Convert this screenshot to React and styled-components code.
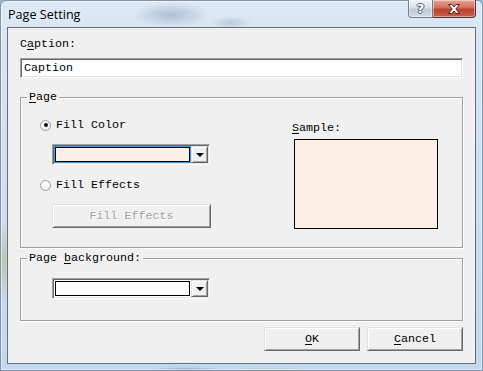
import React from 'react';
import styled, { createGlobalStyle } from 'styled-components';

const GlobalStyle = createGlobalStyle`
  html, body { margin: 0; padding: 0; background: #9fbad6; }
  body { width: 483px; height: 371px; overflow: hidden; }
  * { box-sizing: border-box; }
`;

const Window = styled.div`
  width: 483px;
  height: 371px;
  display: flex;
  flex-direction: column;
  border-radius: 6px 6px 0 0;
  border: 1px solid #7d93ab;
  box-shadow: inset 0 0 0 1px rgba(255, 255, 255, 0.55);
  background:
    radial-gradient(ellipse 55px 18px at 170px 14px, rgba(120, 145, 175, 0.45), transparent 70%),
    radial-gradient(ellipse 30px 10px at 230px 22px, rgba(130, 150, 175, 0.35), transparent 70%),
    radial-gradient(ellipse 10px 60px at 3px 260px, rgba(170, 180, 110, 0.55), transparent 70%),
    radial-gradient(ellipse 60px 4px at 185px 369px, rgba(60, 70, 80, 0.45), transparent 70%),
    radial-gradient(ellipse 60px 4px at 270px 369px, rgba(180, 190, 110, 0.5), transparent 70%),
    linear-gradient(180deg, #dbe8f5 0%, #cfe0f1 40%, #c3d7ec 100%);
  font-family: "Liberation Mono", "DejaVu Sans Mono", monospace;
  font-size: 11.67px;
  color: #000;
`;

const TitleBar = styled.div`
  height: 26px;
  flex: none;
  display: flex;
  align-items: flex-start;
  padding: 0 6px 0 7px;
`;

const Title = styled.div`
  font-family: "Open Sans", "Noto Sans", sans-serif;
  font-size: 12.6px;
  line-height: 16px;
  margin-top: 6px;
  color: #000;
  text-shadow: 0 0 6px rgba(255, 255, 255, 0.9);
`;

const CaptionButtons = styled.div`
  margin-left: auto;
  display: flex;
  margin-top: -1px;
`;

const CaptionButton = styled.div`
  height: 18px;
  width: ${p => p.$w}px;
  display: flex;
  align-items: center;
  justify-content: center;
  border: 1px solid ${p => (p.$close ? '#6d2a22' : '#6c7f93')};
  border-top: none;
  border-radius: ${p => (p.$close ? '0 0 4px 0' : '0 0 0 4px')};
  border-left-width: ${p => (p.$close ? 0 : 1)}px;
  background: ${p =>
    p.$close
      ? 'linear-gradient(180deg, #e4a497 0%, #d0705f 45%, #bb3f2c 55%, #c9614d 100%)'
      : 'linear-gradient(180deg, #eef3f8 0%, #d7e1eb 45%, #bccbdb 55%, #cfdbe7 100%)'};
  box-shadow: inset 0 0 0 1px rgba(255, 255, 255, 0.45);
`;

const HelpGlyph = styled.span`
  font-family: "DejaVu Sans", sans-serif;
  font-weight: bold;
  font-size: 13px;
  line-height: 13px;
  color: #fff;
  text-shadow: -1px 0 #4b5a6a, 1px 0 #4b5a6a, 0 -1px #4b5a6a, 0 1px #4b5a6a;
`;

const Client = styled.div`
  flex: 1;
  margin: 0 6px 6px 6px;
  border: 1px solid #66717e;
  background: #f0f0f0;
  padding: 0 12px;
  display: flex;
  flex-direction: column;
`;

const Label = styled.div`
  line-height: 14px;
  height: 14px;
  margin-top: ${p => p.$mt || 0}px;
  margin-left: ${p => p.$ml || 0}px;
  white-space: pre;
`;

const U = styled.span`
  text-decoration: underline;
  text-underline-offset: 2px;
`;

const TextField = styled.input`
  margin-top: 7px;
  height: 20px;
  width: 100%;
  border: 1px solid;
  border-color: #a0a0a0 #ffffff #ffffff #a0a0a0;
  box-shadow: inset 1px 1px #696969, inset -1px -1px #e3e3e3;
  background: #fff;
  padding: 0 0 0 3px;
  font: inherit;
  color: #000;
  outline: none;
`;

const Group = styled.fieldset`
  margin: ${p => p.$mt}px 0 0 0;
  padding: 0;
  min-width: 0;
  border: 1px solid #a0a0a0;
  box-shadow: inset 1px 1px #ffffff, 1px 1px #ffffff;
`;

const Legend = styled.legend`
  margin-left: 6px;
  padding: 0 2px;
  line-height: 14px;
  height: 14px;
`;

const GroupBody = styled.div`
  display: flex;
  padding: ${p => p.$pad};
`;

const Column = styled.div`
  display: flex;
  flex-direction: column;
  align-items: flex-start;
  margin-left: ${p => p.$ml || 0}px;
`;

const RadioRow = styled.label`
  display: flex;
  align-items: center;
  height: 14px;
  margin-top: ${p => p.$mt}px;
  gap: 5px;
`;

const Radio = styled.span`
  width: 11px;
  height: 11px;
  border-radius: 50%;
  border: 1px solid #9a9a9a;
  background: radial-gradient(circle at 40% 35%, #ffffff 0%, #f4f4f4 60%, #dcdcdc 100%);
  display: flex;
  align-items: center;
  justify-content: center;
  &::after {
    content: '';
    width: 4px;
    height: 4px;
    border-radius: 50%;
    background: ${p => (p.$checked ? '#111' : 'transparent')};
  }
`;

const Combo = styled.div`
  margin-top: ${p => p.$mt}px;
  margin-left: ${p => p.$ml}px;
  width: 158px;
  height: 21px;
  display: flex;
  padding: 1px;
  border: 1px solid;
  border-color: #a0a0a0 #ffffff #ffffff #a0a0a0;
  box-shadow: inset 1px 1px #696969, inset -1px -1px #e3e3e3;
  background: #fff;
`;

const ComboField = styled.div`
  flex: 1;
  padding: 1px;
  background: ${p => (p.$focused ? '#3399ff' : '#fff')};
`;

const Swatch = styled.div`
  height: 100%;
  border: 1px solid #000;
  background: ${p => p.$color};
`;

const DropButton = styled.div`
  width: 17px;
  display: flex;
  align-items: center;
  justify-content: center;
  background: #f0f0f0;
  border: 1px solid;
  border-color: #e3e3e3 #696969 #696969 #e3e3e3;
  box-shadow: inset 1px 1px #fff, inset -1px -1px #a0a0a0;
  &::after {
    content: '';
    border-left: 4px solid transparent;
    border-right: 4px solid transparent;
    border-top: 4px solid #000;
    margin-top: 1px;
  }
`;

const PushButton = styled.button`
  margin-top: ${p => p.$mt || 0}px;
  margin-left: ${p => p.$ml || 0}px;
  width: ${p => p.$w}px;
  height: 24px;
  padding: 0;
  font: inherit;
  line-height: 14px;
  color: ${p => (p.disabled ? '#a0a0a0' : '#000')};
  text-shadow: ${p => (p.disabled ? '1px 1px #ffffff' : 'none')};
  background: #f0f0f0;
  border: 1px solid;
  border-color: #e3e3e3 #696969 #696969 #e3e3e3;
  box-shadow: inset 1px 1px #ffffff, inset -1px -1px #a0a0a0;
  cursor: default;
`;

const SampleBox = styled.div`
  margin-top: 4px;
  margin-left: 2px;
  width: 144px;
  height: 90px;
  border: 1px solid #000;
  background: #fcefe5;
`;

const ButtonRow = styled.div`
  margin-top: 6px;
  display: flex;
  justify-content: flex-end;
  gap: 7px;
`;

function CloseGlyph() {
  return (
    <svg width="16" height="12" viewBox="0 0 16 12">
      <path
        d="M2.5 1.5 H6 L8 4 L10 1.5 H13.5 L9.8 6 L13.5 10.5 H10 L8 8 L6 10.5 H2.5 L6.2 6 Z"
        fill="#ffffff"
        stroke="#5a2018"
        strokeWidth="1"
        strokeLinejoin="round"
      />
    </svg>
  );
}

export default function App() {
  return (
    <>
      <GlobalStyle />
      <Window>
        <TitleBar>
          <Title>Page Setting</Title>
          <CaptionButtons>
            <CaptionButton $w={25}>
              <HelpGlyph>?</HelpGlyph>
            </CaptionButton>
            <CaptionButton $w={43} $close>
              <CloseGlyph />
            </CaptionButton>
          </CaptionButtons>
        </TitleBar>
        <Client>
          <Label $mt={9}>C<U>a</U>ption:</Label>
          <TextField readOnly defaultValue="Caption" />
          <Group $mt={12}>
            <Legend><U>P</U>age</Legend>
            <GroupBody $pad="0 0 18px 19px">
              <Column>
                <RadioRow $mt={14}>
                  <Radio $checked />
                  Fill Color
                </RadioRow>
                <Combo $mt={12} $ml={12}>
                  <ComboField $focused>
                    <Swatch $color="#fcefe5" />
                  </ComboField>
                  <DropButton />
                </Combo>
                <RadioRow $mt={13}>
                  <Radio />
                  Fill Effects
                </RadioRow>
                <PushButton $mt={12} $ml={12} $w={159} disabled>
                  Fill Effects
                </PushButton>
              </Column>
              <Column $ml={81}>
                <Label $mt={17}><U>S</U>ample:</Label>
                <SampleBox />
              </Column>
            </GroupBody>
          </Group>
          <Group $mt={3}>
            <Legend>Page <U>b</U>ackground:</Legend>
            <GroupBody $pad="13px 0 21px 0">
              <Combo $mt={0} $ml={31}>
                <ComboField>
                  <Swatch $color="#ffffff" />
                </ComboField>
                <DropButton />
              </Combo>
            </GroupBody>
          </Group>
          <ButtonRow>
            <PushButton $w={96}><U>O</U>K</PushButton>
            <PushButton $w={96}><U>C</U>ancel</PushButton>
          </ButtonRow>
        </Client>
      </Window>
    </>
  );
}
